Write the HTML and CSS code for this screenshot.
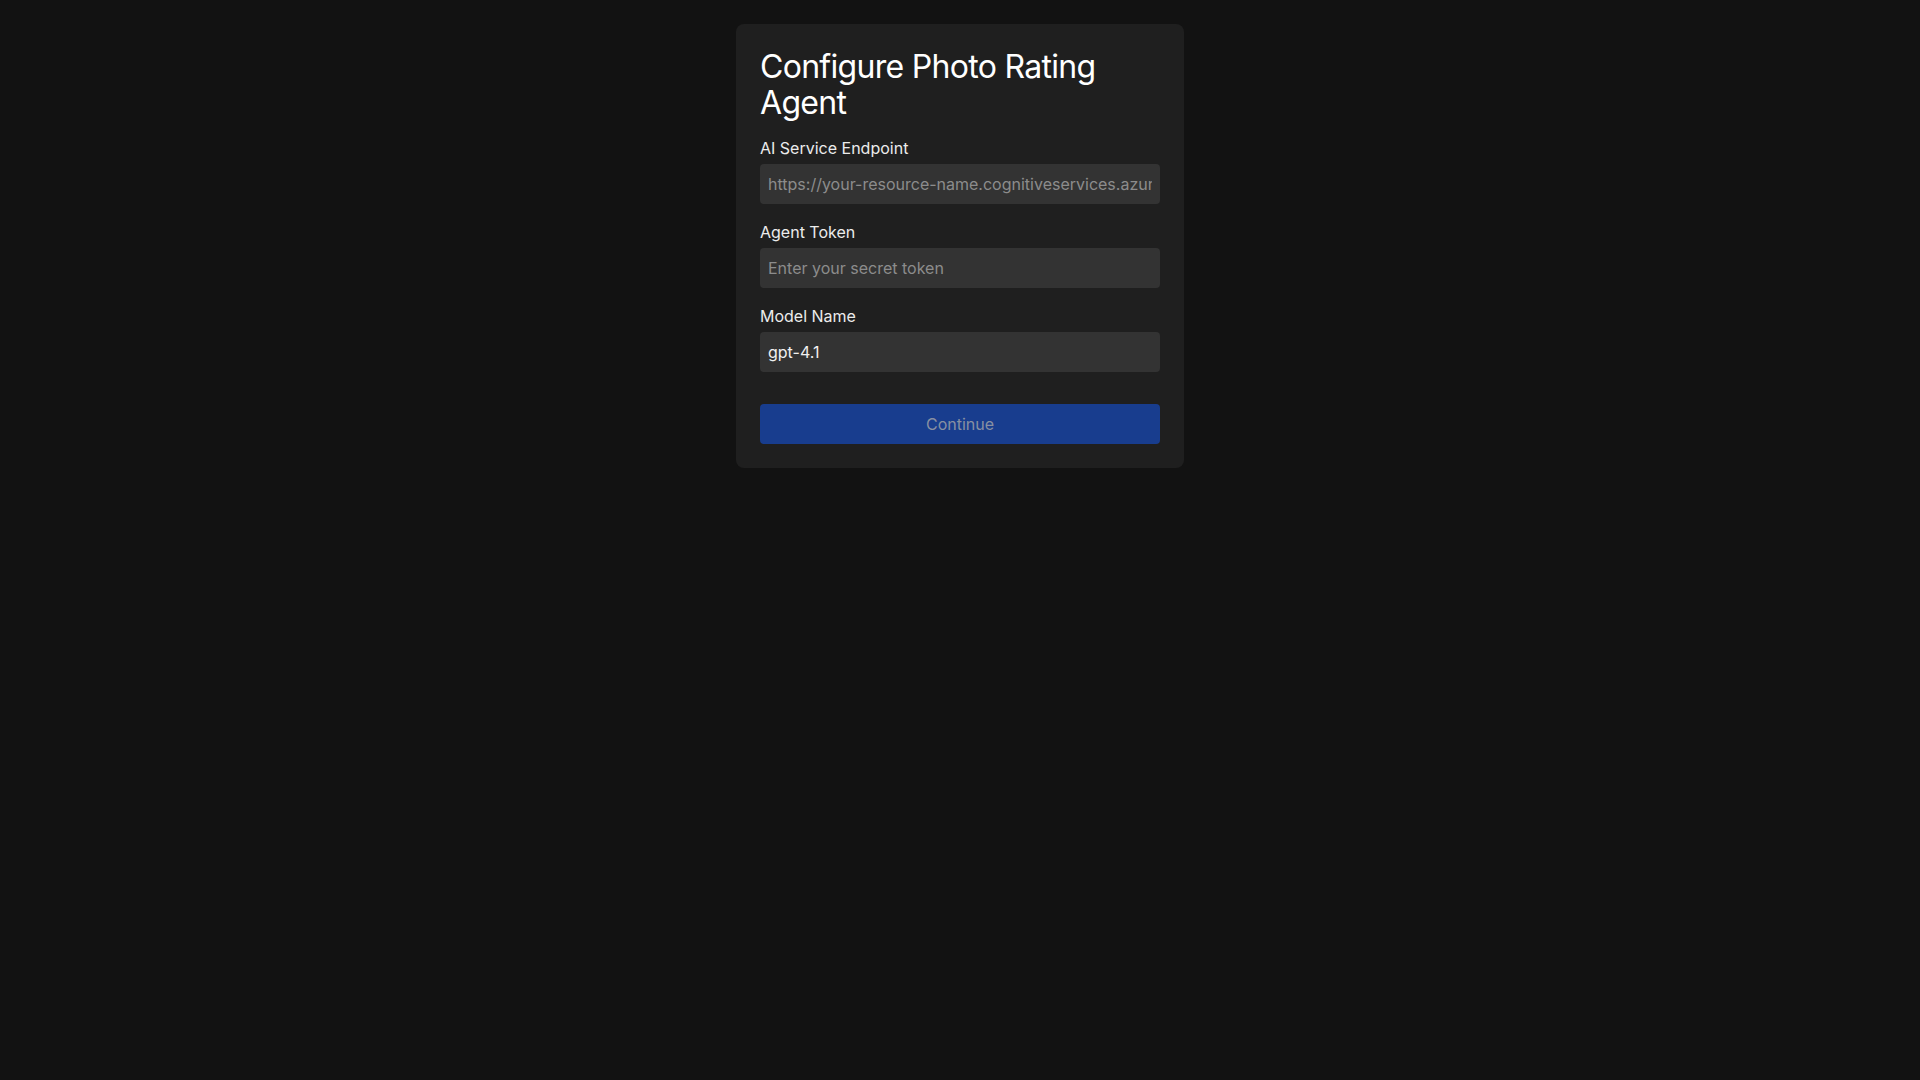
FILE: index.html
```html
<!DOCTYPE html>
<html lang="en">
<head>
<meta charset="utf-8">
<title>Configure Photo Rating Agent</title>
<link rel="stylesheet" href="styles.css">
</head>
<body>
<main class="page">
  <form class="card">
    <h2 class="title">Configure Photo Rating Agent</h2>
    <div class="field">
      <label class="label" for="ep">AI Service Endpoint</label>
      <input class="input" id="ep" type="text" placeholder="https://your-resource-name.cognitiveservices.azure.com/">
    </div>
    <div class="field">
      <label class="label" for="tok">Agent Token</label>
      <input class="input" id="tok" type="password" placeholder="Enter your secret token">
    </div>
    <div class="field">
      <label class="label" for="model">Model Name</label>
      <input class="input" id="model" type="text" value="gpt-4.1">
    </div>
    <button class="button" type="button" disabled>Continue</button>
  </form>
</main>
</body>
</html>
```

FILE: styles.css
```css
* { box-sizing: border-box; }
html, body {
  margin: 0;
  padding: 0;
  background: #121212;
  font-family: Inter, "Noto Sans", sans-serif;
  color: #ececec;
}
.page {
  display: flex;
  justify-content: center;
  padding-top: 24px;
  min-height: 100vh;
}
.card {
  width: 448px;
  background: #1f1f1f;
  border-radius: 8px;
  padding: 24px;
  display: flex;
  flex-direction: column;
  align-self: flex-start;
}
.title {
  margin: 1px 0 17px 0;
  font-size: 32px;
  line-height: 36px;
  font-weight: 400;
  letter-spacing: -0.7px;
  color: #ffffff;
}
.field {
  display: flex;
  flex-direction: column;
  margin-bottom: 18px;
}
.label {
  font-size: 16px;
  line-height: 20px;
  margin-bottom: 6px;
  color: #ececec;
}
.input {
  height: 40px;
  border: none;
  outline: none;
  border-radius: 4px;
  background: #333333;
  color: #f0f0f0;
  font-family: Inter, "Noto Sans", sans-serif;
  font-size: 16px;
  padding: 0 8px;
}
.input::placeholder { color: #8c8c8c; }
.button {
  margin-top: 14px;
  height: 40px;
  border: none;
  border-radius: 4px;
  background: #183d8e;
  color: #8790a2;
  font-family: Inter, "Noto Sans", sans-serif;
  font-size: 16px;
}
```
